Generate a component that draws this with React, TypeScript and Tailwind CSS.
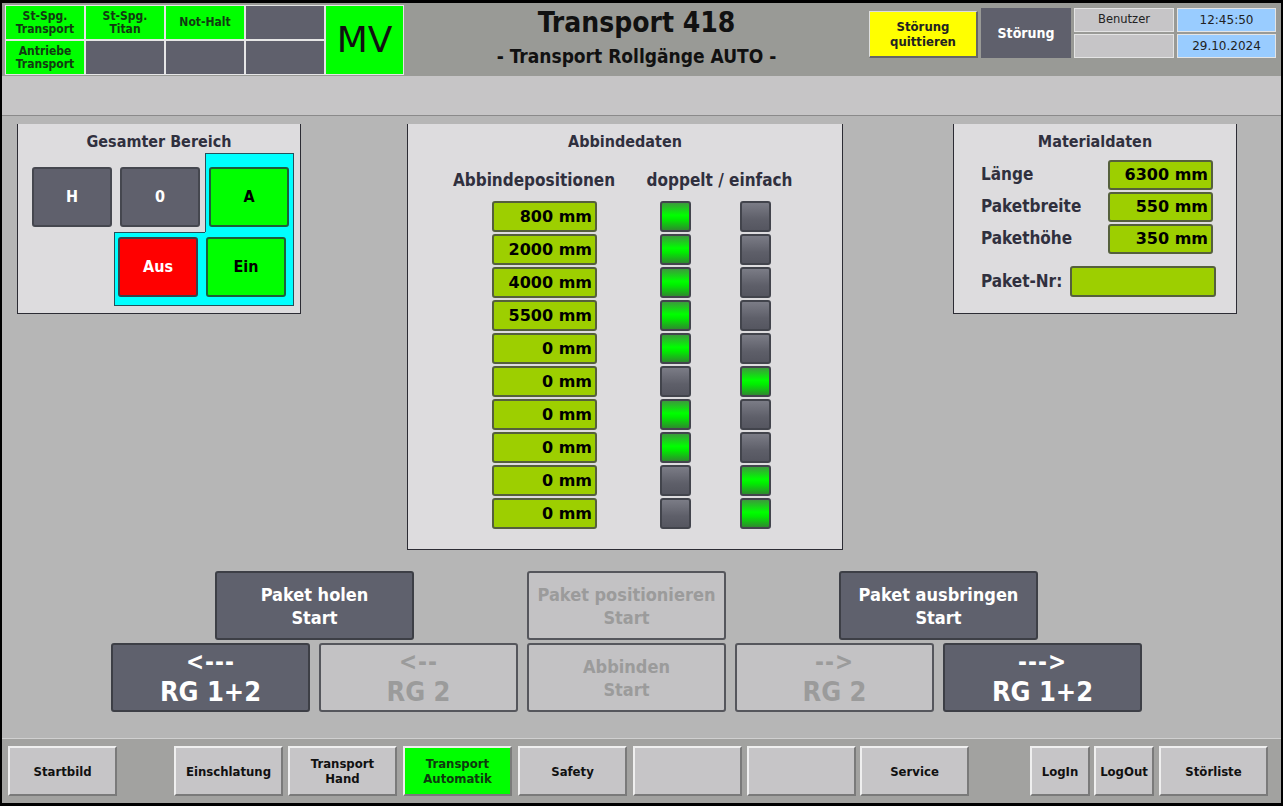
import React from "react";

const font = { fontFamily: '"DejaVu Sans Condensed", "DejaVu Sans", Verdana, sans-serif' };
const wide = { fontFamily: '"DejaVu Sans", Verdana, sans-serif' };

const positions = ["800", "2000", "4000", "5500", "0", "0", "0", "0", "0", "0"];
const doppelt = [true, true, true, true, true, false, true, true, false, false];

function Lamp({ on }: { on: boolean }) {
  return (
    <div
      className={`w-[31px] h-[31px] rounded-[3px] border-2 border-[#42444c] ${
        on
          ? "bg-[linear-gradient(to_bottom,#3b9b3b_0%,#00ff00_45%,#00ee00_60%,#2e8a2e_100%)]"
          : "bg-[linear-gradient(to_bottom,#7b7c86_0%,#5e5f69_60%,#555660_100%)]"
      }`}
    />
  );
}

function ValueBox({ value, w = "w-[105px]", h = "h-[31px]" }: { value: string; w?: string; h?: string }) {
  return (
    <div
      style={wide}
      className={`${w} ${h} rounded-[3px] border-2 border-[#55603c] bg-[#9dcf00] flex items-center justify-end pr-[3px] text-[16px] font-bold text-black`}
    >
      {value}
    </div>
  );
}

function StatusCell({ text, on }: { text?: string; on?: boolean }) {
  return (
    <div
      className={`w-[78px] h-[33px] flex items-center justify-center text-center leading-[13px] text-[12px] font-bold ${
        on ? "bg-[#00ff00] text-[#123a12]" : "bg-[#5f606c]"
      }`}
    >
      {text}
    </div>
  );
}

function BigButton({
  top,
  bottom,
  active,
  big,
}: {
  top: string;
  bottom: string;
  active: boolean;
  big?: boolean;
}) {
  return (
    <div
      className={`w-[199px] h-[69px] rounded-[3px] border-2 flex flex-col items-center justify-center font-bold whitespace-nowrap ${
        active ? "bg-[#5f616d] border-[#3d3f46] text-white" : "bg-[#c3c2c4] border-[#55565c] text-[#9b9b9b]"
      }`}
    >
      {big ? (
        <>
          <div className="text-[24px] leading-[28px] tracking-[1px]">{top}</div>
          <div className="text-[27px] leading-[32px]">{bottom}</div>
        </>
      ) : (
        <>
          <div className="text-[18px] leading-[23px]">{top}</div>
          <div className="text-[18px] leading-[23px]">{bottom}</div>
        </>
      )}
    </div>
  );
}

function NavButton({ label, w = "w-[109px]", green, cls = "" }: { label?: string; w?: string; green?: boolean; cls?: string }) {
  return (
    <div
      className={`${w} ${cls} h-[50px] flex items-center justify-center text-center whitespace-pre-line text-[13px] leading-[15px] font-bold border-t-2 border-l-2 border-t-[#efefef] border-l-[#efefef] border-b-2 border-r-2 border-b-[#7a7a7a] border-r-[#7a7a7a] ${
        green ? "bg-[#00ff00] text-[#0e3a0e]" : "bg-[#c6c5c7] text-[#111]"
      }`}
    >
      {label}
    </div>
  );
}

function PanelTitle({ children }: { children: React.ReactNode }) {
  return <div className="text-center text-[16px] font-bold text-[#30303e] mt-[8px] leading-[20px]">{children}</div>;
}

export default function App() {
  return (
    <div className="w-[1283px] h-[806px] bg-black pt-[3px] pb-[3px] px-[2px] overflow-hidden" style={font}>
      <div className="w-full h-full flex flex-col">
        {/* Header */}
        <div className="h-[73px] bg-[#999a96] flex items-start">
          <div className="mt-[2px] ml-[3px] flex bg-[#e6e6e6] p-[1px] gap-[2px]">
            <div className="grid grid-cols-4 gap-[2px]">
              <StatusCell text="St-Spg. Transport" on />
              <StatusCell text="St-Spg. Titan" on />
              <div className="w-[78px] h-[33px] bg-[#00ff00] text-[#123a12] text-[12px] font-bold flex justify-center pt-[7px]">
                Not-Halt
              </div>
              <StatusCell />
              <StatusCell text="Antriebe Transport" on />
              <StatusCell />
              <StatusCell />
              <StatusCell />
            </div>
            <div style={wide} className="w-[77px] h-[68px] bg-[#00ff00] flex items-center justify-center text-[36px] text-[#111]">
              MV
            </div>
          </div>
          <div className="flex-1 flex flex-col items-center pt-[3px] text-[#111] font-bold">
            <div className="text-[28px] leading-[34px]">Transport 418</div>
            <div className="text-[19px] leading-[26px] mt-[3px]">- Transport Rollgänge AUTO -</div>
          </div>
          <div className="flex items-start mt-[5px] mr-[5px] gap-[3px]">
            <div className="mt-[3px] w-[109px] h-[47px] bg-[#ffff00] border-b-2 border-r-2 border-b-[#666] border-r-[#666] border-t border-l border-t-[#ddd] border-l-[#ddd] flex items-center justify-center text-center text-[13px] leading-[15px] font-bold text-[#222]">
              Störung
              <br />
              quittieren
            </div>
            <div className="w-[90px] h-[50px] bg-[#5f606c] flex items-center justify-center text-white text-[14px] font-bold">
              Störung
            </div>
            <div className="flex flex-col gap-[2px]" style={wide}>
              <div className="w-[100px] h-[24px] bg-[#c6c5c7] border border-[#e4e4e4] flex items-center justify-center text-[11.5px] text-[#222]">
                Benutzer
              </div>
              <div className="w-[100px] h-[24px] bg-[#c6c5c7] border border-[#e4e4e4]" />
            </div>
            <div className="flex flex-col gap-[2px]" style={wide}>
              <div className="w-[99px] h-[24px] bg-[#99ccff] border border-[#e4e4e4] flex items-center justify-center text-[12px] text-[#222]">
                12:45:50
              </div>
              <div className="w-[99px] h-[24px] bg-[#99ccff] border border-[#e4e4e4] flex items-center justify-center text-[12px] text-[#222]">
                29.10.2024
              </div>
            </div>
          </div>
        </div>

        {/* Message band */}
        <div className="h-[40px] bg-[#c6c5c6] border-b border-[#8a8a8a]" />

        {/* Main */}
        <div className="flex-1 bg-[#b6b6b6] pt-[8px] flex flex-col">
          <div className="flex items-start">
            {/* Gesamter Bereich */}
            <div className="ml-[15px] w-[284px] h-[190px] bg-[#dddcde] border border-t-0 border-[#2c2c34] flex flex-col">
              <PanelTitle>Gesamter Bereich</PanelTitle>
              <div className="flex mt-[1px]">
                <div className="ml-[14px] mt-[14px] w-[80px] h-[60px] rounded-[3px] border-2 border-[#45474f] bg-[#5f606c] flex items-center justify-center text-white font-bold text-[16px]">
                  H
                </div>
                <div className="ml-[8px] mt-[14px] w-[80px] h-[60px] rounded-[3px] border-2 border-[#45474f] bg-[#5f606c] flex items-center justify-center text-white font-bold text-[16px]">
                  0
                </div>
                <div className="ml-[5px] w-[89px] h-[79px] bg-[#00ffff] border border-b-0 border-[#25505a] pt-[13px] pl-[3px]">
                  <div className="w-[80px] h-[60px] rounded-[3px] border-2 border-[#1d5e3a] bg-[#00ff00] flex items-center justify-center text-black font-bold text-[16px]">
                    A
                  </div>
                </div>
              </div>
              <div className="ml-[96px] w-[180px] h-[74px] bg-[#00ffff] border border-t-0 border-[#25505a] flex items-start pt-[5px] pl-[3px] gap-[8px] relative">
                <div className="absolute left-[-1px] top-0 w-[91px] border-t border-[#25505a]" />
                <div className="w-[80px] h-[60px] rounded-[3px] border-2 border-[#3c3f48] bg-[#ff0000] flex items-center justify-center text-white font-bold text-[16px]">
                  Aus
                </div>
                <div className="w-[80px] h-[60px] rounded-[3px] border-2 border-[#1d5e3a] bg-[#00ff00] flex items-center justify-center text-black font-bold text-[16px]">
                  Ein
                </div>
              </div>
            </div>

            {/* Abbindedaten */}
            <div className="ml-[106px] w-[436px] h-[426px] bg-[#dddcde] border border-t-0 border-[#2c2c34] flex flex-col">
              <PanelTitle>Abbindedaten</PanelTitle>
              <div className="flex mt-[18px] text-[17px] font-bold text-[#30303e] leading-[20px] whitespace-nowrap">
                <div className="w-[252px] text-center">Abbindepositionen</div>
                <div className="w-[119px] flex justify-center">doppelt / einfach</div>
              </div>
              <div className="flex flex-col gap-[2px] mt-[11px]">
                {positions.map((p, i) => (
                  <div key={i} className="flex items-center">
                    <div className="ml-[84px]">
                      <ValueBox value={`${p} mm`} />
                    </div>
                    <div className="ml-[63px]">
                      <Lamp on={doppelt[i]} />
                    </div>
                    <div className="ml-[49px]">
                      <Lamp on={!doppelt[i]} />
                    </div>
                  </div>
                ))}
              </div>
            </div>

            {/* Materialdaten */}
            <div className="ml-[110px] w-[284px] h-[190px] bg-[#dddcde] border border-t-0 border-[#2c2c34] flex flex-col">
              <PanelTitle>Materialdaten</PanelTitle>
              <div className="flex flex-col gap-[2px] mt-[8px]">
                {[
                  ["Länge", "6300 mm"],
                  ["Paketbreite", "550 mm"],
                  ["Pakethöhe", "350 mm"],
                ].map(([l, v]) => (
                  <div key={l} className="flex items-center">
                    <div className="ml-[27px] w-[127px] text-[17px] font-bold text-[#30303e]">{l}</div>
                    <ValueBox value={v} h="h-[30px]" />
                  </div>
                ))}
              </div>
              <div className="flex items-center mt-[12px]">
                <div className="ml-[27px] w-[89px] text-[17px] font-bold text-[#30303e]">Paket-Nr:</div>
                <ValueBox value="" w="w-[146px]" />
              </div>
            </div>
          </div>

          {/* Buttons */}
          <div className="mt-[21px] ml-[109px] flex flex-col gap-[3px]">
            <div className="flex ml-[104px] gap-[113px]">
              <BigButton top="Paket holen" bottom="Start" active />
              <BigButton top="Paket positionieren" bottom="Start" active={false} />
              <BigButton top="Paket ausbringen" bottom="Start" active />
            </div>
            <div className="flex gap-[9px]">
              <BigButton top="<---" bottom="RG 1+2" active big />
              <BigButton top="<--" bottom="RG 2" active={false} big />
              <BigButton top="Abbinden" bottom="Start" active={false} />
              <BigButton top="-->" bottom="RG 2" active={false} big />
              <BigButton top="--->" bottom="RG 1+2" active big />
            </div>
          </div>
        </div>

        {/* Navigation */}
        <div className="h-[65px] bg-[#a2a2a0] border-t border-[#d0d0d0] pt-[7px] flex items-start">
          <NavButton label="Startbild" cls="ml-[6px]" />
          <NavButton label="Einschlatung" cls="ml-[57px]" />
          <NavButton label={"Transport\nHand"} cls="ml-[5px]" />
          <NavButton label={"Transport\nAutomatik"} green cls="ml-[6px]" />
          <NavButton label="Safety" cls="ml-[6px]" />
          <NavButton cls="ml-[6px]" />
          <NavButton cls="ml-[5px]" />
          <NavButton label="Service" cls="ml-[4px]" />
          <NavButton label="LogIn" w="w-[60px]" cls="ml-[61px]" />
          <NavButton label="LogOut" w="w-[60px]" cls="ml-[4px]" />
          <NavButton label="Störliste" cls="ml-[5px]" />
        </div>
      </div>
    </div>
  );
}
